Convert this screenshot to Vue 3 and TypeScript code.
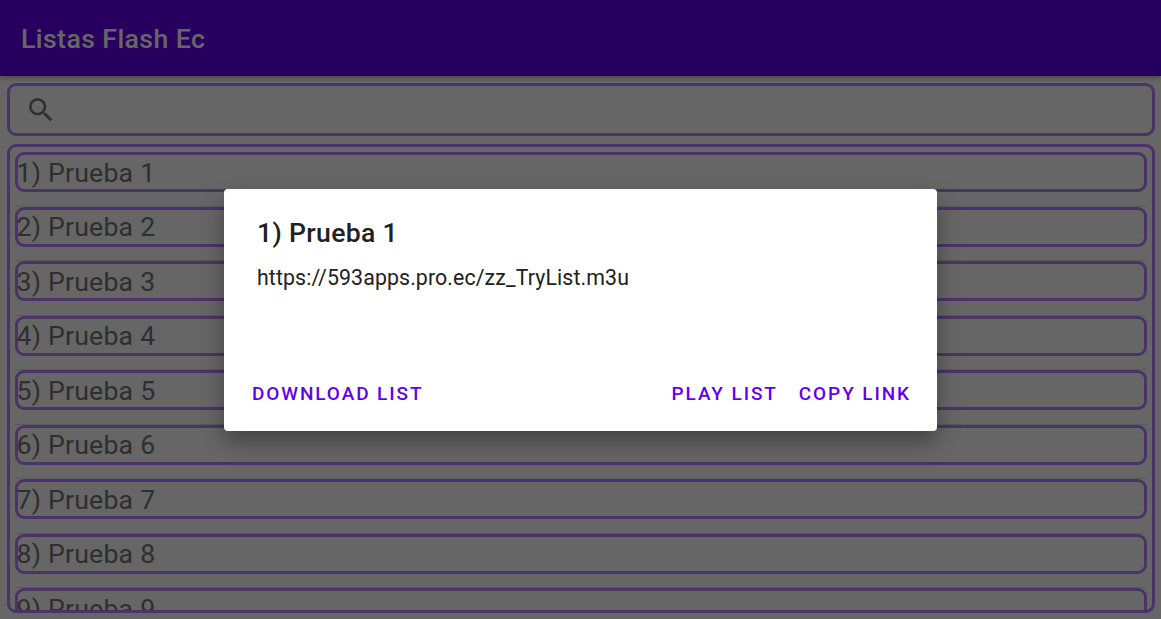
<script setup lang="ts">
const items = Array.from({ length: 9 }, (_, i) => `${i + 1}) Prueba ${i + 1}`)
</script>

<template>
  <div class="screen">
    <header class="app-bar">Listas Flash Ec</header>

    <main class="content">
      <div class="search">
        <svg class="search-icon" viewBox="0 0 24 24" width="32" height="32">
          <path
            fill="currentColor"
            d="M15.5 14h-.79l-.28-.27A6.47 6.47 0 0 0 16 9.5 6.5 6.5 0 1 0 9.5 16c1.61 0 3.09-.59 4.23-1.57l.27.28v.79l5 4.99L20.49 19l-4.99-5zm-6 0C7.01 14 5 11.99 5 9.5S7.01 5 9.5 5 14 7.01 14 9.5 11.99 14 9.5 14z"
          />
        </svg>
      </div>

      <ul class="list">
        <li v-for="item in items" :key="item" class="row">
          <div class="item"><span class="item-text">{{ item }}</span></div>
        </li>
      </ul>
    </main>

    <div class="scrim">
      <section class="dialog">
        <h2 class="dialog-title">1) Prueba 1</h2>
        <p class="dialog-body">https://593apps.pro.ec/zz_TryList.m3u</p>
        <div class="dialog-actions">
          <button class="action">Download list</button>
          <div class="action-group">
            <button class="action">Play list</button>
            <button class="action">Copy link</button>
          </div>
        </div>
      </section>
    </div>
  </div>
</template>

<style>
html,
body {
  margin: 0;
  background: #fff;
}
</style>

<style scoped>
.screen {
  position: relative;
  width: 1161px;
  height: 619px;
  overflow: hidden;
  display: flex;
  flex-direction: column;
  background: #fff;
  font-family: Roboto, "Liberation Sans", sans-serif;
}

.app-bar {
  flex: none;
  height: 76px;
  box-sizing: border-box;
  padding: 2px 0 0 21px;
  display: flex;
  align-items: center;
  background: #6200ee;
  color: #fff;
  font-size: 26.67px;
  letter-spacing: 0.4px;
  font-weight: 500;
  box-shadow: 0 2px 5px rgba(0, 0, 0, 0.3);
}

.content {
  flex: 1;
  min-height: 0;
  display: flex;
  flex-direction: column;
  gap: 8px;
  padding: 7px 6px 6px 7px;
}

.search {
  flex: none;
  height: 53px;
  box-sizing: border-box;
  border: 3px solid #b87fff;
  border-radius: 9px;
  display: flex;
  align-items: center;
  padding-left: 15px;
}

.search-icon {
  color: #757575;
}

.list {
  flex: 1;
  min-height: 0;
  margin: 0;
  padding: 5px 5px 0;
  list-style: none;
  overflow: hidden;
  border: 3px solid #b87fff;
  border-radius: 9px;
}

.row {
  height: 54.5px;
  box-sizing: border-box;
  border-bottom: 1px solid #e0e0e0;
  padding-bottom: 14.5px;
}

.item {
  height: 40px;
  box-sizing: border-box;
  border: 3px solid #b87fff;
  border-radius: 9px;
  padding-top: 2px;
  display: flex;
  align-items: center;
  font-size: 26.67px;
  letter-spacing: 0.2px;
  color: #757575;
  line-height: 1;
}

/* the label sits slightly over the item's left border */
.item-text {
  margin-left: -1.5px;
}

.scrim {
  position: absolute;
  inset: 0;
  display: flex;
  align-items: center;
  justify-content: center;
  background: rgba(0, 0, 0, 0.6);
}

.dialog {
  width: 713px;
  height: 242px;
  box-sizing: border-box;
  display: flex;
  flex-direction: column;
  background: #fff;
  border-radius: 4px;
  padding: 28px 26px 24px 33px;
  box-shadow: 0 11px 22px rgba(0, 0, 0, 0.35);
}

.dialog-title {
  margin: 0;
  font-size: 26.6px;
  letter-spacing: 0.33px;
  line-height: 32px;
  font-weight: 500;
  color: #212121;
}

.dialog-body {
  margin: 15px 0 0;
  font-size: 21.33px;
  letter-spacing: 0.1px;
  line-height: 28px;
  color: #212121;
}

.dialog-actions {
  margin-top: auto;
  margin-left: -5px;
  display: flex;
  justify-content: space-between;
  align-items: center;
}

.action-group {
  display: flex;
  gap: 21px;
}

.action {
  padding: 0;
  border: 0;
  background: none;
  font-family: inherit;
  font-size: 19px;
  line-height: 26px;
  font-weight: 500;
  font-kerning: normal;
  letter-spacing: 1.9px;
  text-transform: uppercase;
  color: #6200ee;
}
</style>
